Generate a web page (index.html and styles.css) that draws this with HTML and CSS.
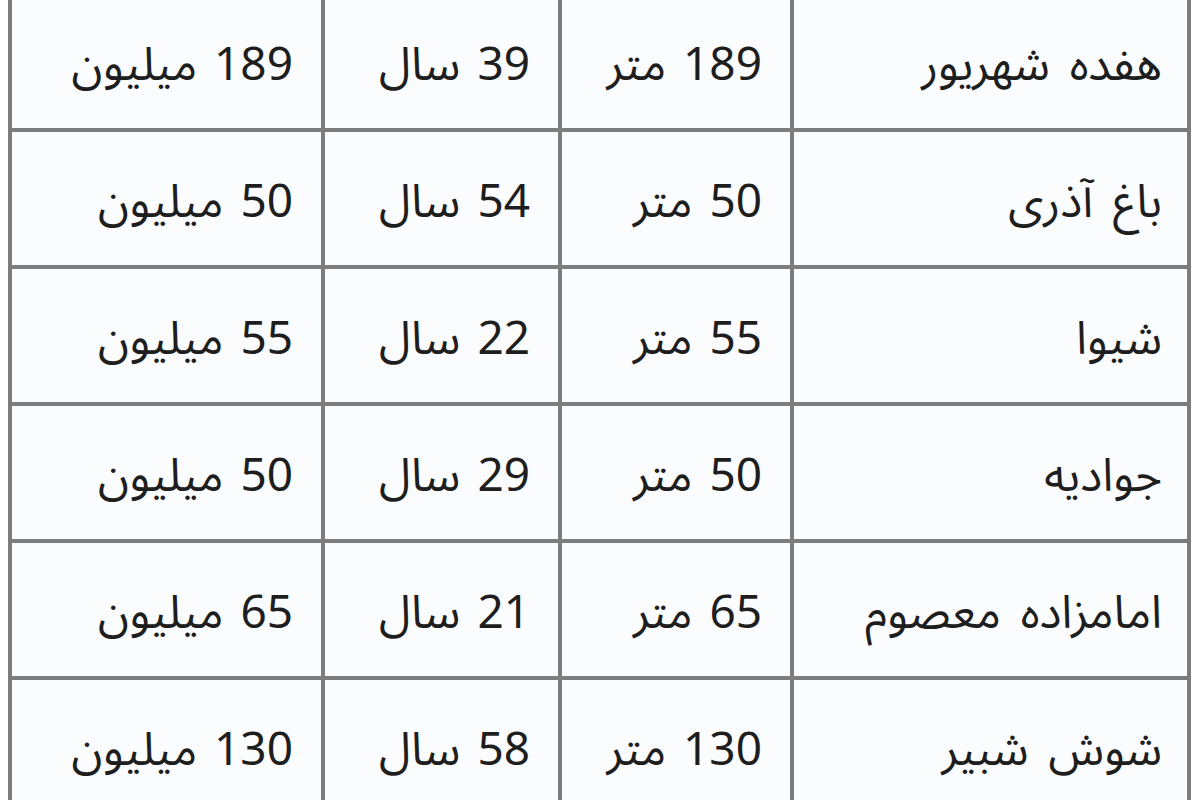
FILE: index.html
```html
<!DOCTYPE html>
<html lang="fa" dir="rtl">
<head>
<meta charset="utf-8">
<title>جدول</title>
<link rel="stylesheet" href="styles.css">
</head>
<body>
<table class="prices">
  <colgroup>
    <col class="c-name">
    <col class="c-area">
    <col class="c-age">
    <col class="c-price">
  </colgroup>
  <tbody>
    <tr><td class="name">هفده شهریور</td><td>189 متر</td><td>39 سال</td><td>189 میلیون</td></tr>
    <tr><td class="name">باغ آذری</td><td>50 متر</td><td>54 سال</td><td>50 میلیون</td></tr>
    <tr><td class="name">شیوا</td><td>55 متر</td><td>22 سال</td><td>55 میلیون</td></tr>
    <tr><td class="name">جوادیه</td><td>50 متر</td><td>29 سال</td><td>50 میلیون</td></tr>
    <tr><td class="name">امامزاده معصوم</td><td>65 متر</td><td>21 سال</td><td>65 میلیون</td></tr>
    <tr><td class="name">شوش شبیر</td><td>130 متر</td><td>58 سال</td><td>130 میلیون</td></tr>
  </tbody>
</table>
</body>
</html>
```

FILE: styles.css
```css
html, body {
  margin: 0;
  padding: 0;
  background: #ffffff;
  overflow: hidden;
}
.prices {
  direction: rtl;
  border-collapse: collapse;
  table-layout: fixed;
  width: 1183px;
  margin: -9px 9px 0 0;
  font-family: "Noto Sans Arabic", "DejaVu Sans", sans-serif;
  font-size: 46px;
  word-spacing: 5px;
  color: #1e1e1e;
  background: #fbfcfd;
}
.c-name { width: 397px; }
.c-area { width: 232px; }
.c-age { width: 237px; }
.c-price { width: 313px; }
.prices td {
  border: 4px solid #7d7d7d;
  height: 137px;
  padding: 7px 28px 0 0;
  text-align: right;
  vertical-align: middle;
  white-space: nowrap;
  box-sizing: border-box;
}
.prices td.name {
  padding-right: 25px;
  word-spacing: 8px;
}
```
